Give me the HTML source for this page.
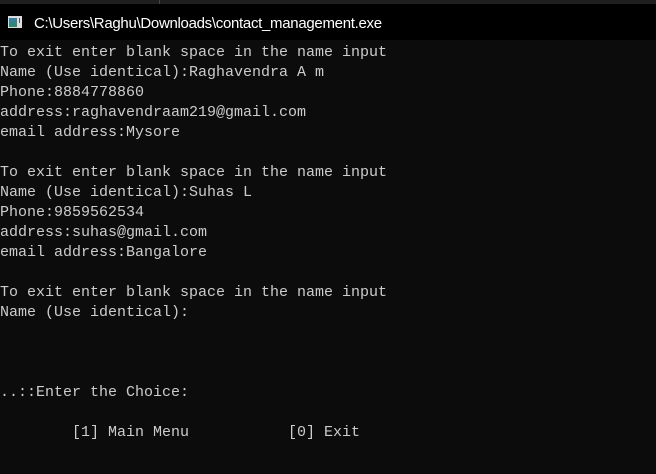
<!DOCTYPE html>
<html><head><meta charset="utf-8"><style>
html,body{margin:0;padding:0;background:#0c0c0c;width:656px;height:474px;overflow:hidden}
.top{position:absolute;left:0;top:0;width:656px;height:4px;background:#1f1f1f}
.top .d{position:absolute;left:159px;top:0;width:1px;height:4px;background:#444}
.title{position:absolute;left:0;top:4px;width:656px;height:36px;background:#000}
.title span{position:absolute;left:34px;top:11px;color:#fff;font:15px "Liberation Sans",sans-serif;letter-spacing:-0.3px}
.icon{position:absolute;left:8px;top:12px;width:14px;height:12px;background:#ddd}
.icon i{position:absolute;left:1px;top:2px;width:8px;height:9px;background:linear-gradient(#3a7fa8,#2b8a6a)}
.icon b{position:absolute;left:11px;top:2px;width:1px;height:5px;background:#555}
pre{position:absolute;left:0;top:43px;margin:0;color:#cccccc;font:15px/20px "Liberation Mono",monospace;letter-spacing:0}
</style></head><body>
<div class="top"><div class="d"></div></div>
<div class="title"><div class="icon"><i></i><b></b></div><span>C:\Users\Raghu\Downloads\contact_management.exe</span></div>
<pre>To exit enter blank space in the name input
Name (Use identical):Raghavendra A m
Phone:8884778860
address:raghavendraam219@gmail.com
email address:Mysore

To exit enter blank space in the name input
Name (Use identical):Suhas L
Phone:9859562534
address:suhas@gmail.com
email address:Bangalore

To exit enter blank space in the name input
Name (Use identical):



..::Enter the Choice:

        [1] Main Menu           [0] Exit</pre>
</body></html>
